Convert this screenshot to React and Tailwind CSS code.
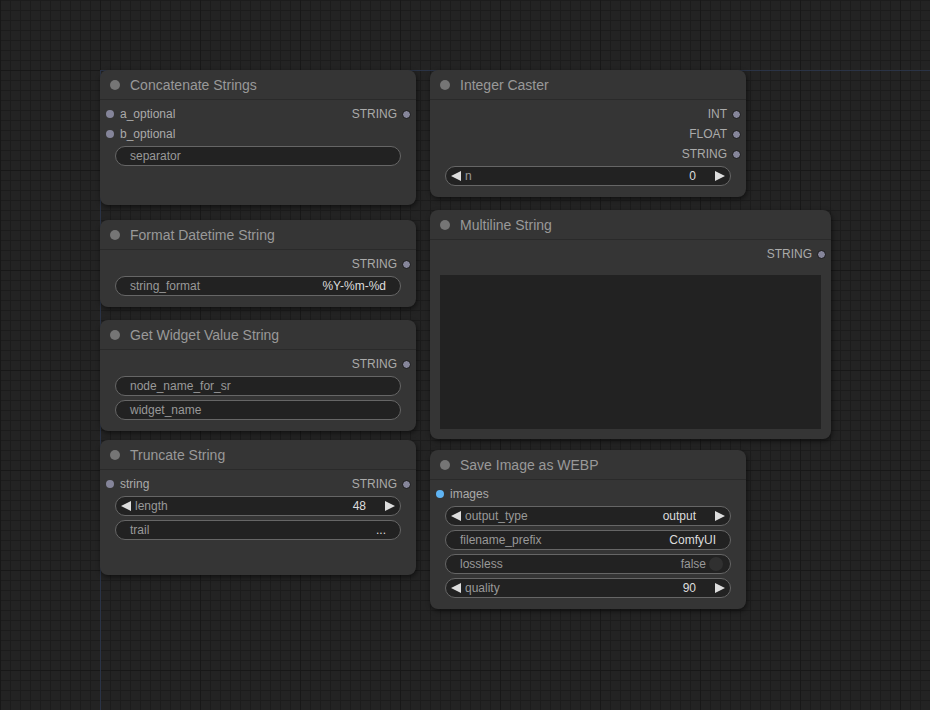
import React from "react";

function Arrow({ dir }) {
  return (
    <svg width="10" height="10" viewBox="0 0 10 10" className="shrink-0">
      {dir === "left" ? (
        <polygon points="10,0 10,10 0,5" fill="#dddddd" />
      ) : (
        <polygon points="0,0 0,10 10,5" fill="#dddddd" />
      )}
    </svg>
  );
}

function Node({ className, title, children }) {
  return (
    <div
      className={
        "absolute rounded-[8px] bg-[#353535] shadow-[1px_2px_5px_rgba(0,0,0,0.55)] flex flex-col " +
        className
      }
    >
      <div className="h-[30px] shrink-0 flex items-center pl-[10px] gap-[10px] border-b border-[#2a2a2a]">
        <span className="w-[10px] h-[10px] rounded-full bg-[#757575]" />
        <span className="text-[14px] text-[#999999] leading-none">{title}</span>
      </div>
      <div className="pt-[4px] flex flex-col">{children}</div>
    </div>
  );
}

function Row({ inLabel, outLabel, inColor }) {
  return (
    <div className="h-5 flex items-center justify-between pl-[6px] pr-[5px] text-[12px] text-[#aaaaaa]">
      <div className="flex items-center gap-[6px]">
        {inLabel && (
          <>
            <span
              className={
                "w-[8px] h-[8px] rounded-full " +
                (inColor === "blue" ? "bg-[#5fb4f4]" : "bg-[#85859a]")
              }
            />
            <span>{inLabel}</span>
          </>
        )}
      </div>
      <div className="flex items-center gap-[5px]">
        {outLabel && (
          <>
            <span>{outLabel}</span>
            <span className="w-[9px] h-[9px] rounded-full bg-[#85859a] border border-[#161616]" />
          </>
        )}
      </div>
    </div>
  );
}

function Widget({ label, value, kind }) {
  return (
    <div className="h-6 flex items-center px-[15px]">
      <div className="h-5 w-full rounded-full border border-[#666666] bg-[#222222] flex items-center text-[12px]">
        {kind === "number" && (
          <>
            <span className="ml-[5px]">
              <Arrow dir="left" />
            </span>
            <span className="ml-[4px] text-[#999999]">{label}</span>
            <span className="ml-auto text-[#dddddd]">{value}</span>
            <span className="ml-[19px] mr-[5px]">
              <Arrow dir="right" />
            </span>
          </>
        )}
        {kind === "text" && (
          <>
            <span className="ml-[14px] text-[#999999]">{label}</span>
            {value && <span className="ml-auto mr-[14px] text-[#dddddd]">{value}</span>}
          </>
        )}
        {kind === "toggle" && (
          <>
            <span className="ml-[14px] text-[#999999]">{label}</span>
            <span className="ml-auto text-[#999999]">{value}</span>
            <span className="ml-[3px] mr-[7px] w-[14px] h-[14px] rounded-full bg-[#303030]" />
          </>
        )}
      </div>
    </div>
  );
}

export default function App() {
  return (
    <div
      className="relative w-[930px] h-[710px] overflow-hidden bg-[#232323] [background-image:linear-gradient(to_right,#181818_1px,transparent_1px),linear-gradient(to_bottom,#181818_1px,transparent_1px),linear-gradient(to_right,#1c1c1c_1px,transparent_1px),linear-gradient(to_bottom,#1c1c1c_1px,transparent_1px)] [background-size:100px_100px,100px_100px,10px_10px,10px_10px] [background-position:0_0,0_70px,0_0,0_0]"
      style={{ fontFamily: '"Liberation Sans", Arial, sans-serif' }}
    >
      {/* canvas axes */}
      <div className="absolute left-[100px] right-0 top-[70px] h-px bg-[#2a3346]" />
      <div className="absolute left-[100px] top-[70px] bottom-0 w-px bg-[#2a3346]" />

      <Node className="left-[100px] top-[70px] w-[316px] h-[135px]" title="Concatenate Strings">
        <Row inLabel="a_optional" outLabel="STRING" />
        <Row inLabel="b_optional" />
        <Widget kind="text" label="separator" />
      </Node>

      <Node className="left-[100px] top-[220px] w-[316px] h-[87px]" title="Format Datetime String">
        <Row outLabel="STRING" />
        <Widget kind="text" label="string_format" value="%Y-%m-%d" />
      </Node>

      <Node className="left-[100px] top-[320px] w-[316px] h-[111px]" title="Get Widget Value String">
        <Row outLabel="STRING" />
        <Widget kind="text" label="node_name_for_sr" />
        <Widget kind="text" label="widget_name" />
      </Node>

      <Node className="left-[100px] top-[440px] w-[316px] h-[135px]" title="Truncate String">
        <Row inLabel="string" outLabel="STRING" />
        <Widget kind="number" label="length" value="48" />
        <Widget kind="text" label="trail" value="..." />
      </Node>

      <Node className="left-[430px] top-[70px] w-[316px] h-[127px]" title="Integer Caster">
        <Row outLabel="INT" />
        <Row outLabel="FLOAT" />
        <Row outLabel="STRING" />
        <Widget kind="number" label="n" value="0" />
      </Node>

      <Node className="left-[430px] top-[210px] w-[401px] h-[229px]" title="Multiline String">
        <Row outLabel="STRING" />
        <div className="mx-[10px] mt-[11px] h-[154px] bg-[#222222]" />
      </Node>

      <Node className="left-[430px] top-[450px] w-[316px] h-[159px]" title="Save Image as WEBP">
        <Row inLabel="images" inColor="blue" />
        <Widget kind="number" label="output_type" value="output" />
        <Widget kind="text" label="filename_prefix" value="ComfyUI" />
        <Widget kind="toggle" label="lossless" value="false" />
        <Widget kind="number" label="quality" value="90" />
      </Node>
    </div>
  );
}
